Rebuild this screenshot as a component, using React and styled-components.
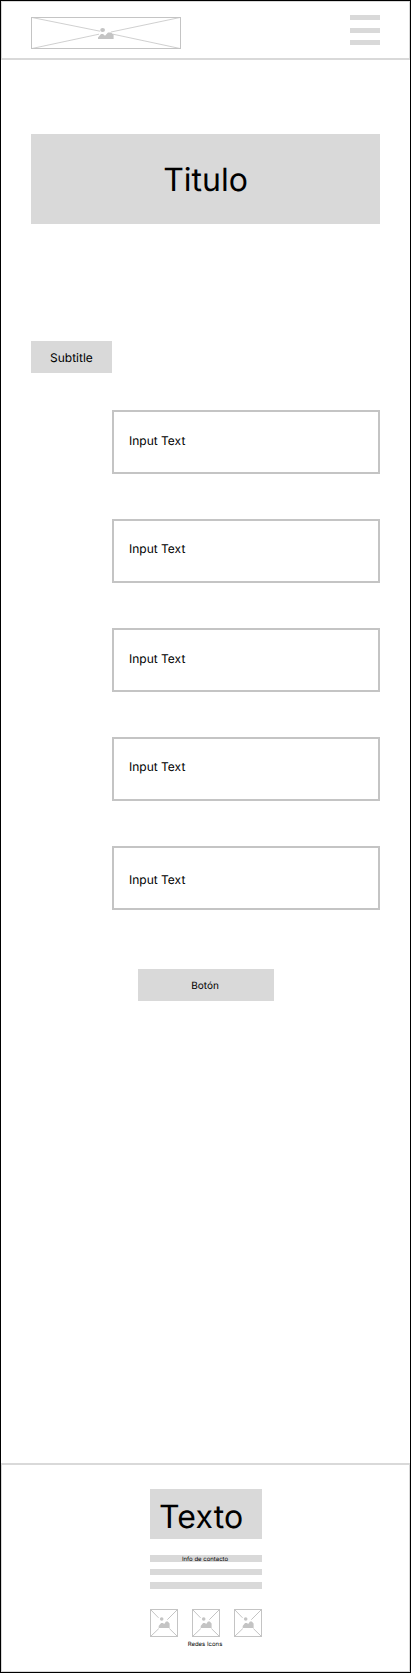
import React from 'react';
import styled, { createGlobalStyle } from 'styled-components';

const GlobalStyle = createGlobalStyle`
  * { box-sizing: border-box; }
  body { margin: 0; background: #fff; }
`;

const Page = styled.div`
  width: 411px;
  height: 1673px;
  border: 1px solid #000;
  display: flex;
  flex-direction: column;
  background: #fff;
  color: #000;
  font-family: Inter, sans-serif;
  text-rendering: geometricPrecision;
`;

const Header = styled.header`
  height: 59px;
  flex: none;
  display: flex;
  justify-content: space-between;
  align-items: flex-start;
  padding: 13px 29px 0;
  border: 1px solid #d9d9d9;
  border-bottom-width: 2px;
`;

const Logo = styled.svg`
  display: block;
  margin-top: 2px;
`;

const Menu = styled.div`
  width: 30px;
  height: 30px;
  display: grid;
  grid-template-rows: 5px 5px 5px;
  row-gap: 8px;
`;

const MenuBar = styled.span`
  background: #d9d9d9;
  margin-top: ${(p) => p.$shift || 0}px;
  height: 5px;
`;

const Main = styled.main`
  flex: 1;
  display: flex;
  flex-direction: column;
  padding: 74px 30px 0;
`;

const Title = styled.h1`
  margin: 0 0 117px;
  height: 90px;
  background: #d9d9d9;
  text-align: center;
  font-size: 32px;
  font-weight: 400;
  line-height: 39px;
  padding-top: 26px;
`;

const Subtitle = styled.h2`
  margin: 0 0 37px;
  width: 81px;
  height: 32px;
  background: #d9d9d9;
  font-size: 12px;
  font-weight: 400;
  line-height: 15px;
  padding: 9px 0 0 19px;
`;

const Form = styled.div`
  display: flex;
  flex-direction: column;
  gap: 45px;
  margin-left: 81px;
`;

const Field = styled.div`
  height: 64px;
  border: 2px solid #c4c4c4;
  padding: ${(p) => p.$top}px 0 0 15px;
  font-size: 12px;
  line-height: 15px;
`;

const Button = styled.button`
  margin: 59px 0 0 107px;
  width: 136px;
  height: 32px;
  border: 0;
  background: #d9d9d9;
  color: #000;
  font: 400 10px/12px Inter, sans-serif;
  text-rendering: inherit;
  padding: 2px 2px 0 0;
`;

const Footer = styled.footer`
  height: 209px;
  flex: none;
  border: 1px solid #d9d9d9;
  border-top-width: 2px;
  padding: 24px 0 0 148px;
`;

const FooterColumn = styled.div`
  width: 112px;
  display: flex;
  flex-direction: column;
`;

const FooterTitle = styled.div`
  height: 50px;
  background: #d9d9d9;
  font-size: 32px;
  line-height: 39px;
  letter-spacing: 0.15px;
  padding: 8px 0 0 9px;
  margin-bottom: 16px;
`;

const InfoBar = styled.div`
  height: ${(p) => p.$height}px;
  background: #d9d9d9;
  margin-bottom: 7px;
  font-size: 6px;
  line-height: 9px;
  text-align: center;
  padding-right: 2px;
`;

const Socials = styled.div`
  display: flex;
  justify-content: space-between;
  margin-top: 13px;
`;

const Caption = styled.div`
  font-size: 6px;
  line-height: 7px;
  text-align: center;
  margin-top: 4px;
  padding-right: 2px;
`;

const LogoPlaceholder = () => (
  <Logo width="150" height="32" viewBox="0 0 150 32" fill="none" stroke="#c4c4c4">
    <rect x="0.5" y="0.5" width="149" height="31" />
    <path d="M1 .5 69 14.2M149 .5 80 15M1 31.5 68 17.2M149 31.5 82 17.2" strokeWidth="0.8" />
    <ellipse cx="71.6" cy="13" rx="2.4" ry="2" fill="#c4c4c4" stroke="none" />
    <path d="M67 22v-1.6l3-3.4h2l2 1.8 3-3.4h3l2.6 2v2.4V22z" fill="#c4c4c4" stroke="none" />
  </Logo>
);

const IconPlaceholder = () => (
  <svg width="28" height="28" viewBox="0 0 28 28" fill="none" stroke="#c4c4c4">
    <rect x="0.5" y="0.5" width="27" height="27" />
    <path d="M.5 .5 8.5 8.8M27.5 .5 17.3 10.7M.5 27.5 8.8 19.6M27.5 27.5 19.4 19.6" />
    <circle cx="11.7" cy="10" r="1.8" fill="#c4c4c4" stroke="none" />
    <path d="M8.7 19v-2l2.4-3h1.8l1.3 1 1.8-2.4h1.8l1.8 2V19z" fill="#c4c4c4" stroke="none" />
  </svg>
);

const fields = [21, 20, 21, 20, 24];

export default function App() {
  return (
    <>
      <GlobalStyle />
      <Page>
        <Header>
          <LogoPlaceholder />
          <Menu>
            <MenuBar />
            <MenuBar />
            <MenuBar $shift={-1} />
          </Menu>
        </Header>
        <Main>
          <Title>Titulo</Title>
          <Subtitle>Subtitle</Subtitle>
          <Form>
            {fields.map((top, i) => (
              <Field key={i} $top={top}>Input Text</Field>
            ))}
          </Form>
          <Button>Botón</Button>
        </Main>
        <Footer>
          <FooterColumn>
            <FooterTitle>Texto</FooterTitle>
            <InfoBar $height={7}>Info de contacto</InfoBar>
            <InfoBar $height={6} />
            <InfoBar $height={7} />
            <Socials>
              <IconPlaceholder />
              <IconPlaceholder />
              <IconPlaceholder />
            </Socials>
            <Caption>Redes Icons</Caption>
          </FooterColumn>
        </Footer>
      </Page>
    </>
  );
}
